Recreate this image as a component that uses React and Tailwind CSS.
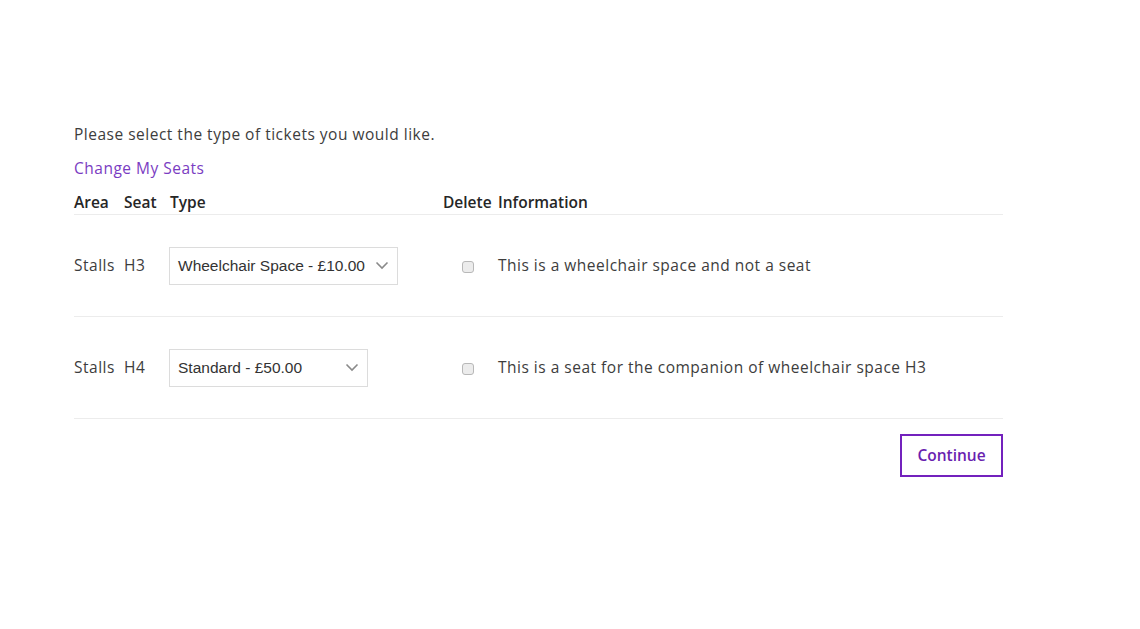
import { useState } from "react";

const rows = [
  {
    area: "Stalls",
    seat: "H3",
    type: "Wheelchair Space - £10.00",
    width: "w-[229px]",
    info: "This is a wheelchair space and not a seat",
  },
  {
    area: "Stalls",
    seat: "H4",
    type: "Standard - £50.00",
    width: "w-[199px]",
    info: "This is a seat for the companion of wheelchair space H3",
  },
];

function Chevron() {
  return (
    <svg width="14" height="9" viewBox="0 0 14 9" fill="none">
      <path d="M1.5 1.5 7 7l5.5-5.5" stroke="#8a8a8a" strokeWidth="1.6" />
    </svg>
  );
}

export default function App() {
  const [checked, setChecked] = useState({});

  return (
    <div className="min-h-[629px] bg-white font-['Open_Sans',sans-serif] text-[15.5px] tracking-[0.5px] text-[#3d3d3d]">
      <div className="ml-[74px] w-[929px] pt-[122px]">
        <p className="leading-6">Please select the type of tickets you would like.</p>
        <a href="#" className="mt-[10px] block leading-6 text-[#7a3cc2]">
          Change My Seats
        </a>

        <table className="mt-[12px] w-full table-fixed border-collapse">
          <colgroup>
            <col className="w-[50px]" />
            <col className="w-[46px]" />
            <col className="w-[273px]" />
            <col className="w-[55px]" />
            <col />
          </colgroup>
          <thead>
            <tr className="border-b border-[#ececec]">
              <th className="pb-[2px] text-left font-semibold leading-5 tracking-normal text-[#262626]">Area</th>
              <th className="pb-[2px] text-left font-semibold leading-5 tracking-normal text-[#262626]">Seat</th>
              <th className="pb-[2px] text-left font-semibold leading-5 tracking-normal text-[#262626]">Type</th>
              <th className="pb-[2px] text-left font-semibold leading-5 tracking-normal text-[#262626]">Delete</th>
              <th className="pb-[2px] text-left font-semibold leading-5 tracking-normal text-[#262626]">Information</th>
            </tr>
          </thead>
          <tbody>
            {rows.map((row) => (
              <tr key={row.seat} className="h-[102px] border-b border-[#ececec]">
                <td className="align-middle">{row.area}</td>
                <td className="align-middle">{row.seat}</td>
                <td className="align-middle">
                  <div
                    className={`-ml-px flex h-[38px] ${row.width} items-center justify-between border border-[#dcdcdc] bg-white pl-[8px] pr-[8px] font-['Liberation_Sans',sans-serif] text-[15.5px] tracking-normal text-[#333]`}
                  >
                    <span>{row.type}</span>
                    <Chevron />
                  </div>
                </td>
                <td className="align-middle">
                  <input
                    type="checkbox"
                    checked={!!checked[row.seat]}
                    onChange={() =>
                      setChecked((c) => ({ ...c, [row.seat]: !c[row.seat] }))
                    }
                    className="ml-[19px] h-[12px] w-[12px] appearance-none rounded-[3px] border border-[#b8b8b8] bg-[#ececec] align-middle checked:bg-[#7a3cc2]"
                  />
                </td>
                <td className="align-middle">{row.info}</td>
              </tr>
            ))}
          </tbody>
        </table>

        <div className="mt-[15px] flex justify-end">
          <button className="h-[43px] w-[103px] border-2 border-[#7321bd] font-semibold tracking-normal text-[#6a1fb0]">
            Continue
          </button>
        </div>
      </div>
    </div>
  );
}
